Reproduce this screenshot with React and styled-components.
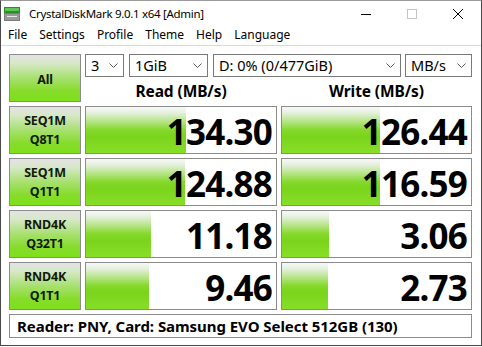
import React from "react";
import styled, { createGlobalStyle } from "styled-components";

const Global = createGlobalStyle`
  html, body { margin: 0; padding: 0; background: #fff; }
  body { font-family: "Noto Sans", "Open Sans", sans-serif; }
  * { box-sizing: border-box; }
`;

const Window = styled.div`
  width: 482px;
  height: 346px;
  border: 1px solid #4a4a4a;
  border-top-color: #9a9a9a;
  background: #fff;
  display: flex;
  flex-direction: column;
`;

const TitleBar = styled.div`
  height: 25px;
  display: flex;
  align-items: center;
  padding-left: 3px;
`;

const Title = styled.span`
  font-size: 11.5px;
  letter-spacing: -0.3px;
  color: #000;
  margin-left: 9px;
  flex: 1;
  padding-bottom: 1px;
`;

const Controls = styled.div`
  display: flex;
  height: 100%;
`;

const CtrlBtn = styled.div`
  width: 46px;
  height: 100%;
  display: flex;
  align-items: center;
  justify-content: center;
`;

const MenuBar = styled.div`
  height: 20px;
  display: flex;
  align-items: center;
  padding-left: 1px;
  border-bottom: 1px solid #dadada;
`;

const MenuItem = styled.span`
  font-size: 12px;
  color: #000;
  padding: 0 6px;
  padding-bottom: 2px;
`;

const Body = styled.div`
  padding: 8px 0 0 8px;
`;

const Grid = styled.div`
  display: grid;
  grid-template-columns: 72px 192px 191px;
  grid-template-rows: repeat(5, 48px) 24px;
  gap: 4px;
`;

const buttonBg = `linear-gradient(to bottom, #e4e4e4 0%, #d6e8c8 18%, #a8e070 50%, #86dc2c 78%, #7ee01a 100%)`;

const LabelButton = styled.div`
  border: 1px solid #8c8c8c;
  background: ${buttonBg};
  display: flex;
  flex-direction: column;
  align-items: center;
  justify-content: center;
  font-weight: 700;
  font-size: 12.5px;
  line-height: 19px;
  color: #121a0c;
  letter-spacing: -0.2px;
  padding-top: ${(p) => (p.$single ? "2px" : "0")};
`;

const TopPanel = styled.div`
  grid-column: 2 / span 2;
  display: flex;
  flex-direction: column;
`;

const ComboRow = styled.div`
  display: flex;
  height: 25px;
  gap: 5px;
`;

const Combo = styled.div`
  width: ${(p) => p.$w}px;
  margin-right: ${(p) => p.$mr || 0}px;
  border: 1px solid #7a7a7a;
  background: #fff;
  display: flex;
  align-items: center;
  padding: 0 5px 1px 5px;
  font-size: 14.5px;
  color: #000;
`;

const ComboText = styled.span`
  flex: 1;
  white-space: nowrap;
  overflow: hidden;
`;

const HeaderRow = styled.div`
  flex: 1;
  display: grid;
  grid-template-columns: 192px 191px;
  gap: 4px;
`;

const Header = styled.div`
  font-weight: 700;
  font-size: 15.5px;
  text-align: center;
  padding-top: 3px;
  color: #000;
  letter-spacing: -0.1px;
`;

const Cell = styled.div`
  position: relative;
  border: 1px solid #8c8c8c;
  background: #fff;
  overflow: hidden;
`;

const Bar = styled.div`
  position: absolute;
  left: 0;
  top: 0;
  bottom: 0;
  background: linear-gradient(to bottom, #f8f8f8 0%, #e6f0de 12%, #b4e484 32%, #84d82a 50%, #7bd41c 64%, #86de28 100%);
`;

const Value = styled.div`
  position: relative;
  height: 100%;
  display: flex;
  align-items: center;
  justify-content: flex-end;
  padding-right: 4px;
  padding-top: 2px;
  font-weight: 700;
  font-size: 35px;
  letter-spacing: -0.8px;
  color: #000;
`;

const Footer = styled.div`
  grid-column: 1 / span 3;
  border: 1px solid #8c8c8c;
  display: flex;
  align-items: center;
  padding-left: 7px;
  font-weight: 700;
  font-size: 15px;
  color: #000;
  letter-spacing: -0.05px;
`;

const Chevron = () => (
  <svg width="9" height="5" viewBox="0 0 9 5">
    <path d="M0.5 0.5 L4.5 4.5 L8.5 0.5" fill="none" stroke="#5a5a5a" strokeWidth="1" />
  </svg>
);

const AppIcon = () => (
  <svg width="16" height="14" viewBox="0 0 16 14">
    <rect x="0" y="0" width="16" height="6" fill="#2e8b2e" />
    <rect x="1" y="1" width="14" height="3" fill="#5cc85c" />
    <rect x="0" y="6" width="16" height="8" fill="#7a7a7a" />
    <rect x="1" y="7" width="14" height="6" fill="#9a9a9a" />
    <rect x="3" y="9" width="10" height="1" fill="#e8e8e8" />
  </svg>
);

const rows = [
  { a: "SEQ1M", b: "Q8T1", r: "134.30", rw: 100, w: "126.44", ww: 98 },
  { a: "SEQ1M", b: "Q1T1", r: "124.88", rw: 99, w: "116.59", ww: 98 },
  { a: "RND4K", b: "Q32T1", r: "11.18", rw: 65, w: "3.06", ww: 47 },
  { a: "RND4K", b: "Q1T1", r: "9.46", rw: 63, w: "2.73", ww: 46 },
];

export default function App() {
  return (
    <>
      <Global />
      <Window>
        <TitleBar>
          <AppIcon />
          <Title>CrystalDiskMark 9.0.1 x64 [Admin]</Title>
          <Controls>
            <CtrlBtn>
              <svg width="10" height="10" viewBox="0 0 10 10">
                <path d="M0 5.5 H10" stroke="#000" strokeWidth="1" />
              </svg>
            </CtrlBtn>
            <CtrlBtn>
              <svg width="10" height="10" viewBox="0 0 10 10">
                <rect x="0.5" y="0.5" width="9" height="9" fill="none" stroke="#c4c4c4" strokeWidth="1" />
              </svg>
            </CtrlBtn>
            <CtrlBtn>
              <svg width="10" height="10" viewBox="0 0 10 10">
                <path d="M0 0 L10 10 M10 0 L0 10" stroke="#000" strokeWidth="1" />
              </svg>
            </CtrlBtn>
          </Controls>
        </TitleBar>
        <MenuBar>
          {["File", "Settings", "Profile", "Theme", "Help", "Language"].map((m) => (
            <MenuItem key={m}>{m}</MenuItem>
          ))}
        </MenuBar>
        <Body>
          <Grid>
            <LabelButton $single>All</LabelButton>
            <TopPanel>
              <ComboRow>
                <Combo $w={39}><ComboText>3</ComboText><Chevron /></Combo>
                <Combo $w={79}><ComboText>1GiB</ComboText><Chevron /></Combo>
                <Combo $w={188} $mr={-1}><ComboText>D: 0% (0/477GiB)</ComboText><Chevron /></Combo>
                <Combo $w={67}><ComboText>MB/s</ComboText><Chevron /></Combo>
              </ComboRow>
              <HeaderRow>
                <Header>Read (MB/s)</Header>
                <Header>Write (MB/s)</Header>
              </HeaderRow>
            </TopPanel>
            {rows.map((row, i) => (
              <React.Fragment key={i}>
                <LabelButton>
                  <span>{row.a}</span>
                  <span>{row.b}</span>
                </LabelButton>
                <Cell>
                  <Bar style={{ width: row.rw }} />
                  <Value>{row.r}</Value>
                </Cell>
                <Cell>
                  <Bar style={{ width: row.ww }} />
                  <Value>{row.w}</Value>
                </Cell>
              </React.Fragment>
            ))}
            <Footer>Reader: PNY, Card: Samsung EVO Select 512GB (130)</Footer>
          </Grid>
        </Body>
      </Window>
    </>
  );
}
